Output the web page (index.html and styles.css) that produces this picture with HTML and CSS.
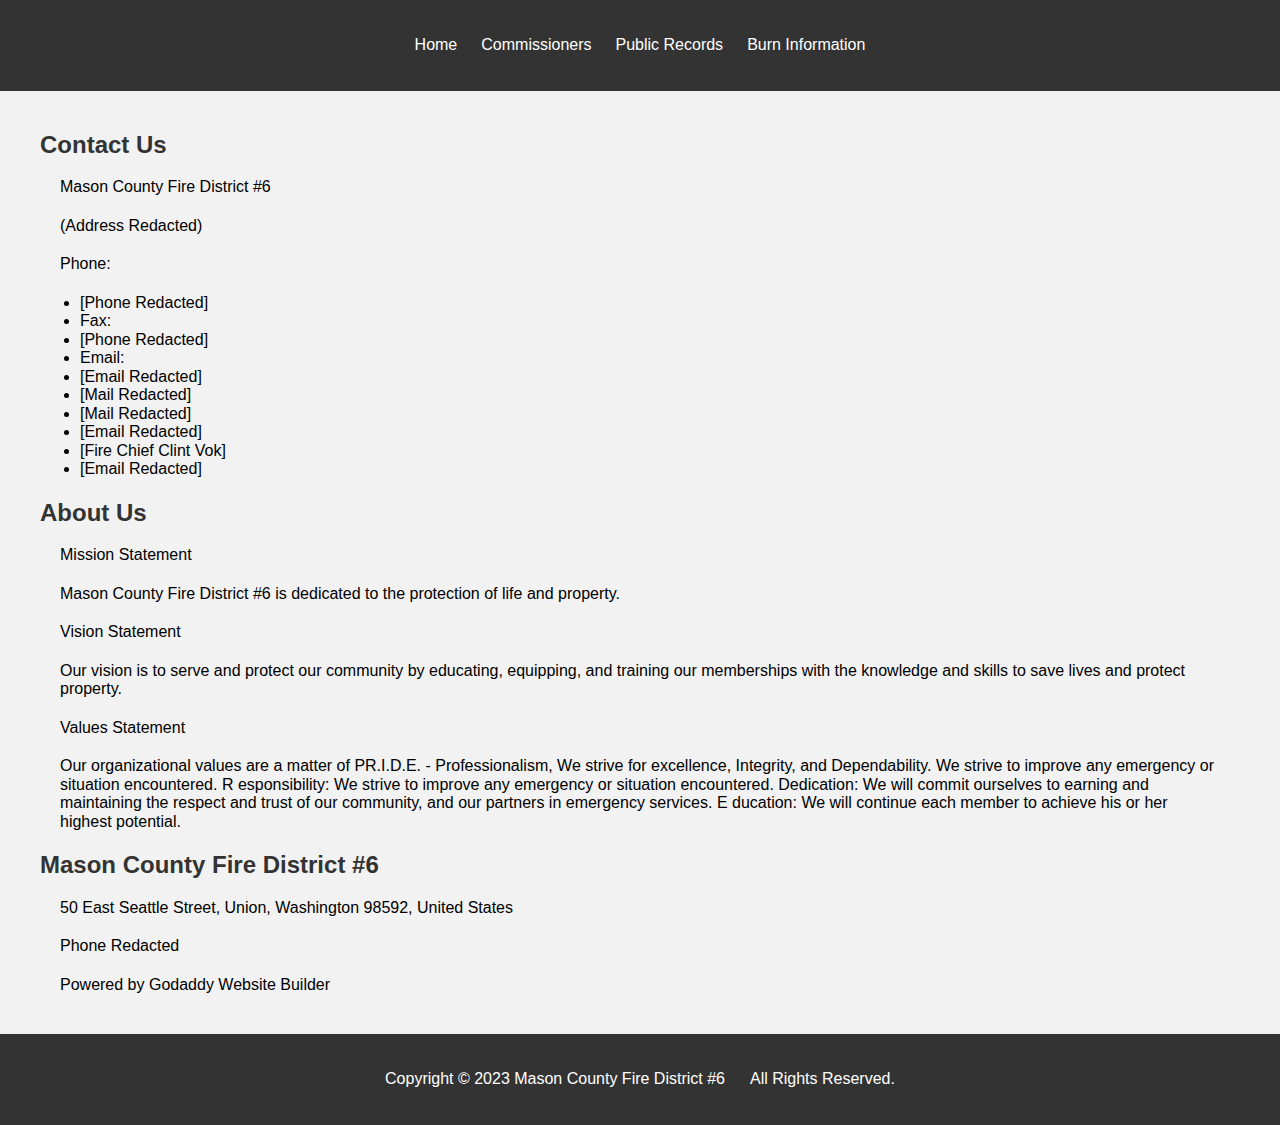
FILE: index.html
```html
<!DOCTYPE html>
<html lang="en">
<head>
<meta charset="utf-8">
<title>Mason County Fire District #6</title>
<link rel="stylesheet" href="styles.css">
</head>
<body>
<header class="site-header">
  <nav>
    <ul class="nav-list">
      <li><a href="#">Home</a></li>
      <li><a href="#">Commissioners</a></li>
      <li><a href="#">Public Records</a></li>
      <li><a href="#">Burn Information</a></li>
    </ul>
  </nav>
</header>
<main class="content">
  <section class="block">
    <h2>Contact Us</h2>
    <p>Mason County Fire District #6</p>
    <p>(Address Redacted)</p>
    <p>Phone:</p>
    <ul class="list">
      <li>[Phone Redacted]</li>
      <li>Fax:</li>
      <li>[Phone Redacted]</li>
      <li>Email:</li>
      <li>[Email Redacted]</li>
      <li>[Mail Redacted]</li>
      <li>[Mail Redacted]</li>
      <li>[Email Redacted]</li>
      <li>[Fire Chief Clint Vok]</li>
      <li>[Email Redacted]</li>
    </ul>
  </section>
  <section class="block">
    <h2>About Us</h2>
    <p>Mission Statement</p>
    <p>Mason County Fire District #6 is dedicated to the protection of life and property.</p>
    <p>Vision Statement</p>
    <p>Our vision is to serve and protect our community by educating, equipping, and training our memberships with the knowledge and skills to save lives and protect property.</p>
    <p>Values Statement</p>
    <p>Our organizational values are a matter of PR.I.D.E. - Professionalism, We strive for excellence, Integrity, and Dependability. We strive to improve any emergency or situation encountered. R esponsibility: We strive to improve any emergency or situation encountered. Dedication: We will commit ourselves to earning and maintaining the respect and trust of our community, and our partners in emergency services. E ducation: We will continue each member to achieve his or her highest potential.</p>
  </section>
  <section class="block">
    <h2>Mason County Fire District #6</h2>
    <p>50 East Seattle Street, Union, Washington 98592, United States</p>
    <p>Phone Redacted</p>
    <p>Powered by Godaddy Website Builder</p>
  </section>
</main>
<footer class="site-footer">
  <p>Copyright © 2023 Mason County Fire District #6</p>
  <p>All Rights Reserved.</p>
</footer>
</body>
</html>
```
FILE: styles.css
```css
html, body {
  margin: 0;
  padding: 0;
}
body {
  font-family: "Liberation Sans", Arial, sans-serif;
  font-size: 16px;
  line-height: 18.5px;
  background: #f2f2f2;
  color: #000;
}
.site-header {
  background: #333;
  padding: 20px;
}
.nav-list {
  list-style: none;
  margin: 16px 0;
  padding: 0;
  display: flex;
  justify-content: center;
}
.nav-list li {
  margin: 0 12px;
}
.nav-list a {
  color: #fff;
  text-decoration: none;
}
.content {
  padding: 20px 40px;
}
.block h2 {
  font-size: 24px;
  line-height: 27.6px;
  color: #333;
  margin: 20px 0;
}
.block p {
  margin: 20px 20px;
}
.list {
  margin: 16px 0;
  padding-left: 40px;
}
.site-footer {
  background: #333;
  color: #fff;
  padding: 20px;
  display: flex;
  justify-content: center;
  gap: 25px;
}
.site-footer p {
  margin: 16px 0;
}
```
